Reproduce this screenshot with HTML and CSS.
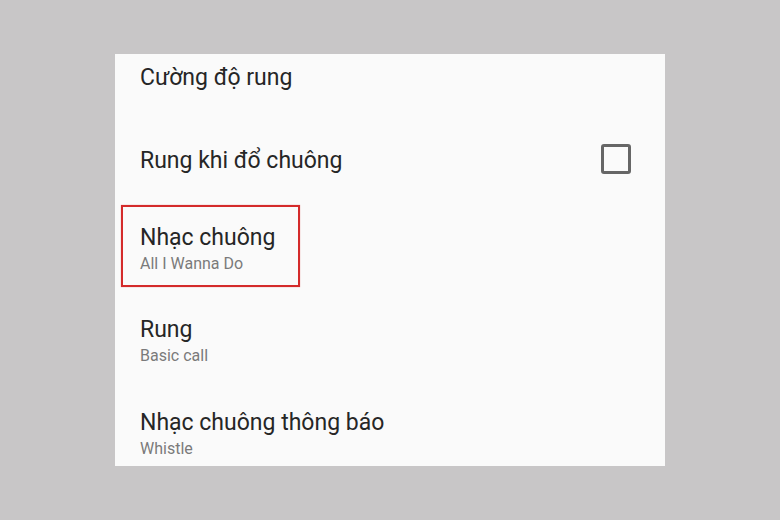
FILE: index.html
```html
<!DOCTYPE html>
<html lang="vi">
<head>
<meta charset="utf-8">
<link rel="stylesheet" href="styles.css">
</head>
<body>
<div class="panel">
  <div class="row row-top">
    <div class="title">Cường độ rung</div>
  </div>
  <div class="row row-single">
    <div class="title">Rung khi đổ chuông</div>
    <div class="checkbox"></div>
  </div>
  <div class="row row-double highlight-host">
    <div class="title">Nhạc chuông</div>
    <div class="sub">All I Wanna Do</div>
    <div class="highlight"></div>
  </div>
  <div class="row row-double">
    <div class="title">Rung</div>
    <div class="sub">Basic call</div>
  </div>
  <div class="row row-double">
    <div class="title">Nhạc chuông thông báo</div>
    <div class="sub">Whistle</div>
  </div>
</div>
</body>
</html>
```
FILE: styles.css
```css
html, body {
  margin: 0;
  padding: 0;
  background: #c8c6c7;
  width: 780px;
  height: 520px;
  overflow: hidden;
}
body {
  padding-top: 54px;
  padding-left: 115px;
  box-sizing: border-box;
  font-family: Roboto, "Noto Sans", sans-serif;
}
.panel {
  width: 550px;
  height: 412px;
  background: #fafafa;
  overflow: hidden;
  display: flex;
  flex-direction: column;
}
.row {
  box-sizing: border-box;
  padding-left: 25px;
  padding-right: 34px;
  flex: none;
}
.row-top {
  height: 63px;
  padding-top: 10px;
}
.row-single {
  height: 86px;
  padding-top: 1px;
  display: flex;
  align-items: center;
  justify-content: space-between;
}
.row-double {
  height: 92.5px;
  padding-top: 20.5px;
}
.title {
  font-size: 23px;
  line-height: 28px;
  color: #262626;
}
.sub {
  font-size: 16px;
  line-height: 24px;
  color: #7a7a7a;
}
.checkbox {
  width: 30px;
  height: 30px;
  box-sizing: border-box;
  border: 3px solid #666666;
  border-radius: 3px;
  margin-bottom: 4px;
}
.highlight-host {
  position: relative;
}
.highlight {
  position: absolute;
  left: 6px;
  top: 2px;
  width: 179px;
  height: 82px;
  box-sizing: border-box;
  border: 2px solid #d42a2a;
  box-shadow: 0 0 1px rgba(212, 42, 42, 0.5);
}
```
